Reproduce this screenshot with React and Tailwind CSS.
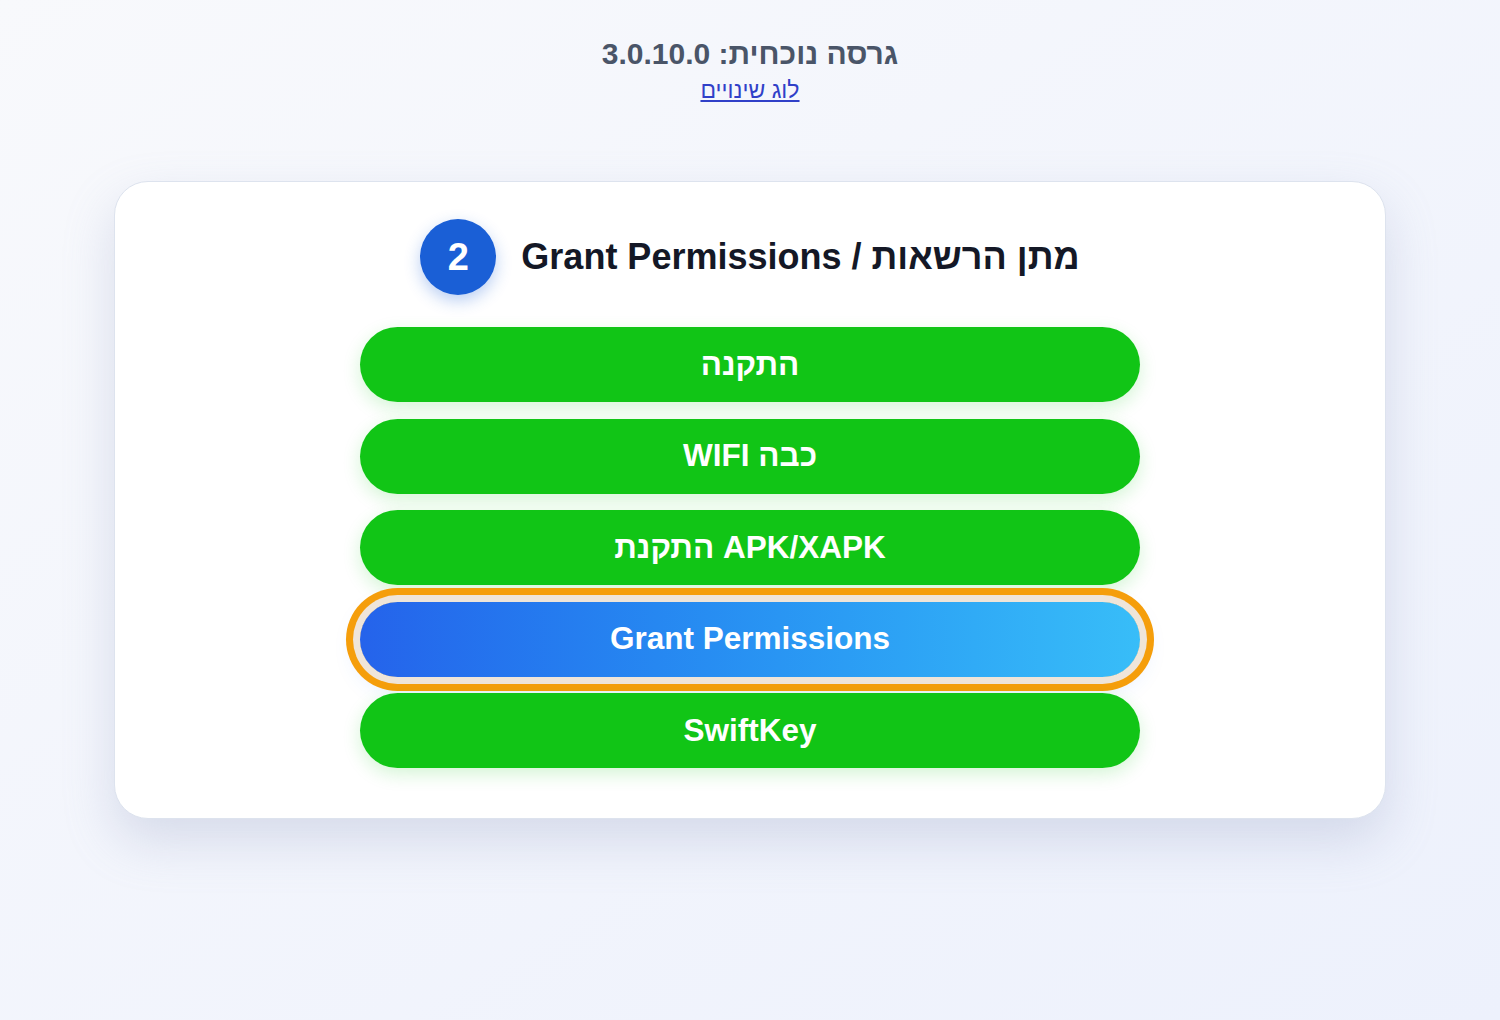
import React from 'react'

const STEPS = [
  { label: 'התקנה' },
  { label: 'כבה WIFI' },
  { label: 'APK/XAPK התקנת' },
  { label: 'Grant Permissions', active: true },
  { label: 'SwiftKey' },
]

function StepButton({ label, active }) {
  if (active) {
    return (
      <button
        className="h-[75px] w-full rounded-full bg-gradient-to-r from-[#2563eb] to-[#38bdf8] text-[31.5px] font-bold text-white shadow-[0_0_0_7px_#efe5d9,0_0_0_14px_#f59e0b,0_8px_24px_rgba(59,130,246,0.25)]"
      >
        {label}
      </button>
    )
  }
  return (
    <button className="h-[75px] w-full rounded-full bg-[#11c516] text-[31.5px] font-bold text-white shadow-[0_6px_18px_rgba(17,197,22,0.18)]">
      {label}
    </button>
  )
}

export default function App() {
  return (
    <div
      dir="rtl"
      className="min-h-[1020px] bg-gradient-to-br from-[#f8f9fc] to-[#edf1fc] pt-[36px] text-center"
      style={{ fontFamily: '"Liberation Sans", Arial, sans-serif' }}
    >
      {/* Version header */}
      <div className="text-[30px] font-bold leading-9 text-[#4a5568]">גרסה נוכחית: 3.0.10.0</div>
      <a href="#" className="mt-[4px] inline-block text-[23px] leading-7 text-[#3040c8] underline">
        לוג שינויים
      </a>

      {/* Step card */}
      <div className="mx-auto mt-[76px] w-[1272px] rounded-[34px] border border-[#dde3ee] bg-white pt-[37px] pb-[50px] shadow-[0_22px_50px_rgba(148,160,195,0.3)]">
        <div className="flex items-center justify-center gap-[25px]">
          <h2 className="text-[36px] font-bold leading-none text-[#141826]">מתן הרשאות / Grant Permissions</h2>
          <div className="flex h-[76px] w-[76px] items-center justify-center rounded-full bg-[#1a5fd6] text-[38px] font-bold text-white shadow-[0_6px_16px_rgba(26,95,214,0.3)]">
            2
          </div>
        </div>

        <div className="mx-auto mt-[32px] flex w-[780px] flex-col gap-[16.5px]">
          {STEPS.map(s => (
            <StepButton key={s.label} label={s.label} active={s.active} />
          ))}
        </div>
      </div>
    </div>
  )
}
